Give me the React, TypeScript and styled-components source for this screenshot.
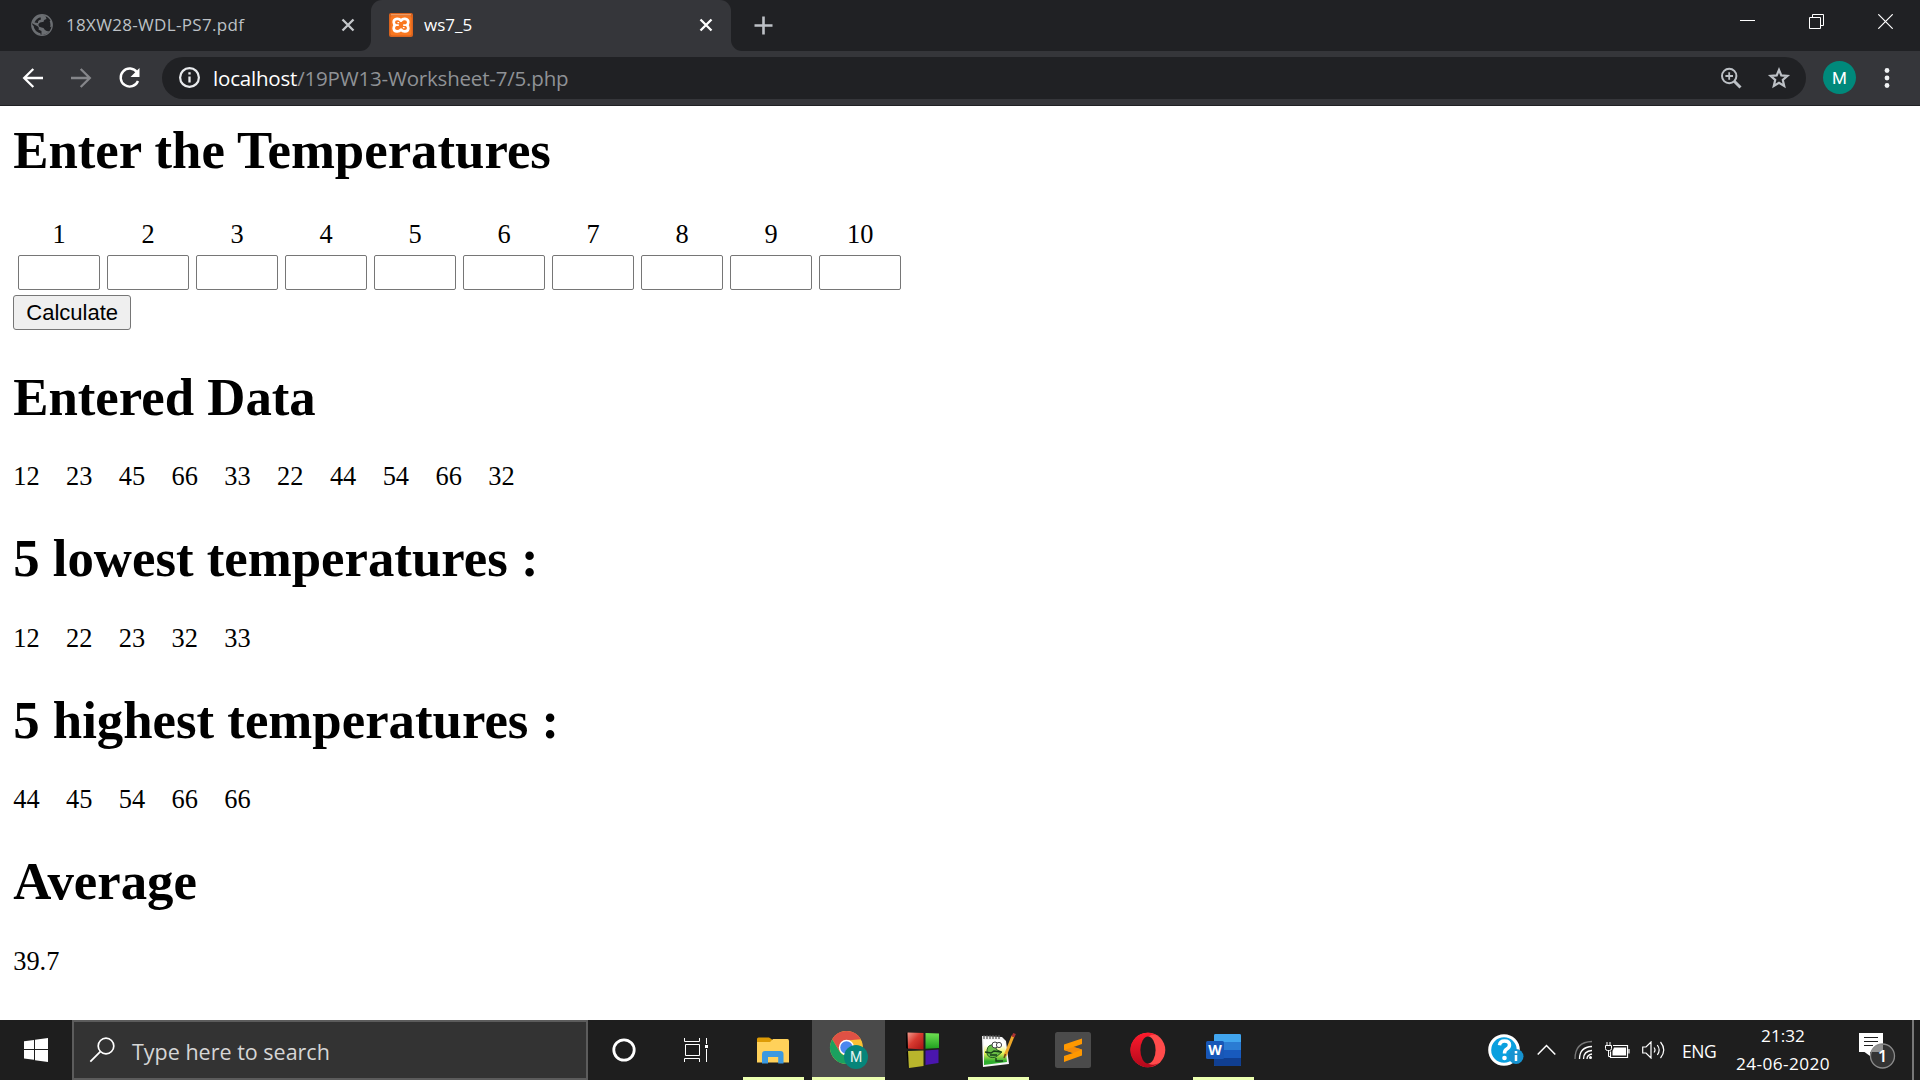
import React from "react";
import styled, { createGlobalStyle } from "styled-components";

const ui = `"Open Sans", "Noto Sans", sans-serif`;

const Global = createGlobalStyle`
  html, body { margin: 0; padding: 0; overflow: hidden; background: #fff; }
  * { box-sizing: border-box; }
  svg { display: block; flex: none; }
`;

const Screen = styled.div`
  width: 1920px;
  height: 1080px;
  display: flex;
  flex-direction: column;
  overflow: hidden;
`;

/* ---------- tab strip ---------- */
const TabStrip = styled.header`
  display: flex;
  height: 51px;
  flex: none;
  background: #35363a;
  font-family: ${ui};
  font-size: 17px;
`;
const InactiveTab = styled.div`
  width: 371px;
  display: flex;
  align-items: center;
  padding: 0 15px 1px 31px;
  background: #202124;
  border-bottom-right-radius: 11px;
  color: #bdc1c6;
`;
const ActiveTabSlot = styled.div`
  width: 360px;
  background: #202124;
`;
const ActiveTab = styled.div`
  height: 100%;
  display: flex;
  align-items: center;
  padding: 0 17px 1px 18px;
  border-radius: 11px 11px 0 0;
  background: #35363a;
  color: #fff;
`;
const TabTitle = styled.span<{ $gap: number; $track?: number }>`
  flex: 1;
  margin-left: ${(p) => p.$gap}px;
  line-height: 22px;
  letter-spacing: ${(p) => p.$track ?? 0}px;
  white-space: nowrap;
`;
const StripRest = styled.div`
  flex: 1;
  display: flex;
  justify-content: space-between;
  background: #202124;
  border-bottom-left-radius: 11px;
  padding-left: 23px;
`;
const NewTab = styled.div`
  display: flex;
  align-items: center;
  padding-bottom: 1px;
`;
const WindowButtons = styled.div`
  display: flex;
  height: 43px;
`;
const WindowButton = styled.div`
  width: 69px;
  display: flex;
  align-items: center;
  justify-content: center;
`;

/* ---------- toolbar ---------- */
const Toolbar = styled.nav`
  height: 55px;
  flex: none;
  display: flex;
  align-items: center;
  padding: 0 21px 1px 21px;
  background: #35363a;
  border-bottom: 1px solid #202124;
`;
const NavIcons = styled.div`
  display: flex;
  gap: 24px;
  width: 141px;
`;
const AddressBar = styled.div`
  flex: 1;
  height: 42px;
  display: flex;
  align-items: center;
  border-radius: 21px;
  padding: 0 15px 0 16px;
  background: #202124;
`;
const Url = styled.div`
  flex: 1;
  margin-left: 12px;
  font-family: ${ui};
  font-size: 20.5px;
  line-height: 28px;
  letter-spacing: -0.19px;
  color: #8f9296;
  white-space: nowrap;
`;
const Host = styled.span`
  color: #fff;
`;
const AddressActions = styled.div`
  display: flex;
  gap: 24px;
`;
const Avatar = styled.div`
  width: 33px;
  height: 33px;
  margin: 0 19px 0 17px;
  display: flex;
  align-items: center;
  justify-content: center;
  border-radius: 50%;
  background: #00897b;
  color: #fff;
  font: 400 17px Roboto, sans-serif;
`;

/* ---------- document ---------- */
const Page = styled.main`
  flex: 1;
  min-height: 0;
  overflow: hidden;
  padding: 14px 13.2px 0;
  background: #fff;
  color: #000;
  font-family: "Liberation Serif", "Times New Roman", serif;
  font-size: 26.4px;
  line-height: 30px;
`;
const Heading = styled.h1`
  margin: 0 0 33.4px;
  font-size: 52.8px;
  line-height: 61px;
  font-weight: 700;
  white-space: nowrap;
`;
const Form = styled.form`
  display: flex;
  flex-direction: column;
  align-items: flex-start;
  margin-bottom: 36.6px;
`;
const Grid = styled.div`
  display: grid;
  grid-template-columns: repeat(10, 82px);
  column-gap: 7px;
  row-gap: 6px;
  padding: 5px;
  text-align: center;
`;
const Field = styled.input`
  width: 82px;
  height: 35px;
  border: 1px solid #767676;
  border-radius: 2px;
  background: #fff;
  outline: none;
`;
const Submit = styled.button`
  width: 118px;
  height: 35px;
  padding: 0;
  border: 1px solid #767676;
  border-radius: 3px;
  background: #efefef;
  color: #000;
  font: 22px "Liberation Sans", Arial, sans-serif;
`;
const Values = styled.p`
  margin: 0 0 37.1px;
  display: flex;
  gap: 26.4px;
`;

/* ---------- taskbar ---------- */
const Taskbar = styled.footer`
  height: 60px;
  flex: none;
  display: flex;
  background: #1e1e1e;
  color: #fff;
  font-family: ${ui};
`;
const Start = styled.div`
  width: 72px;
  display: flex;
  align-items: center;
  justify-content: center;
`;
const Search = styled.div`
  width: 516px;
  display: flex;
  align-items: center;
  padding-left: 15px;
  border: 2px solid #5c5c5c;
  background: #333;
  color: #d6d6d6;
  font-size: 21.5px;
`;
const SearchLabel = styled.span`
  margin: 3px 0 0 17px;
  white-space: nowrap;
`;
const Shell = styled.div`
  width: 72px;
  display: flex;
  align-items: center;
  justify-content: center;
`;
const Apps = styled.div`
  display: flex;
  gap: 2px;
  margin-left: 5px;
`;
const AppButton = styled.div<{ $state?: "open" | "active" }>`
  width: 73px;
  display: flex;
  flex-direction: column;
  align-items: center;
  background: ${(p) => (p.$state === "active" ? "#4a4a4a" : "transparent")};
  &::after {
    content: "";
    height: 3px;
    width: ${(p) => (p.$state === "active" ? 73 : 61)}px;
    background: ${(p) => (p.$state ? "#ecffb0" : "transparent")};
  }
`;
const AppIcon = styled.div`
  flex: 1;
  display: flex;
  align-items: center;
  padding: 3px 2px 0 0;
`;
const Tray = styled.div`
  flex: 1;
  display: flex;
  align-items: center;
  justify-content: flex-end;
`;
const TrayIcon = styled.div<{ $gap: number }>`
  margin-right: ${(p) => p.$gap}px;
`;
const Language = styled.span`
  width: 35px;
  font-size: 17.5px;
  letter-spacing: -0.4px;
  margin-top: 1px;
`;
const Clock = styled.div`
  width: 98px;
  margin: 0 26px 0 17px;
  display: flex;
  flex-direction: column;
  align-items: center;
  font-size: 17.2px;
  line-height: 28px;
  white-space: nowrap;
`;
const ClockDate = styled.span`
  letter-spacing: 0.42px;
`;
const ShowDesktop = styled.div`
  width: 8px;
  height: 60px;
  margin-left: 16px;
  border-left: 2px solid #777;
`;

const Close = ({ color }: { color: string }) => (
  <svg width="16" height="16" viewBox="0 0 16 16">
    <path d="M2.5 2.5l11 11M13.5 2.5l-11 11" stroke={color} strokeWidth="2.3" />
  </svg>
);

const Globe = () => (
  <svg width="22" height="22" viewBox="0 0 22 22">
    <circle cx="11" cy="11" r="9.7" fill="#202124" stroke="#6b6e72" strokeWidth="2.4" />
    <path d="M12.5 1.5Q17 2.500 19.500 6.500Q17 9 14.500 7.500Q14 10 11.500 9.500Q8.500 9.500 9 11.500Q14.500 10.500 14.500 14Q17 14.500 20.500 12.500Q19.500 18 14 20.500Q11.500 21 9.500 20.500V17.500Q6.500 17.500 6.500 14.500L1.500 11Q1 10 1.500 9L6.500 10.500Q8 9.500 6.500 7.500Q7 5 10 5Q13 4.500 12.500 1.500Z" fill="#202124" stroke="none" />
    <path d="M11 1A10 10 0 0 0 1.500 9.500L7 12.500Q8.500 14 7.500 15.500L10.500 17V21Q15.500 21 18.500 17Q15.500 18 13.500 15.500Q13 13.500 10.500 13.500Q7 13 7.500 10Q9 7.500 12.500 8Q12.500 5.500 15.500 5L14.500 2Q13 1 11 1Z" fill="#6b6e72" />
    <path d="M9.500 3.200Q5 4.500 3.500 8.500L7 9Q6.500 6 10 5.500Z" fill="#202124" />
  </svg>
);

const Xampp = () => (
  <svg width="24" height="24" viewBox="0 0 24 24">
    <rect width="24" height="24" rx="2" fill="#d9631e" />
    <rect x="1.5" y="3" width="21" height="19.5" rx="2" fill="#f97820" />
    <path d="M2 1.8h20" stroke="#f7b27e" />
    <path d="M12 7.600Q10.500 5.700 8 5.900Q4.700 6.200 4.700 9.300Q4.800 11.300 6.200 12.200Q4.700 13.300 4.700 15.300Q4.900 18.200 8 18.400Q10.500 18.500 12 16.600Q13.500 18.500 16 18.400Q19.100 18.200 19.300 15.300Q19.300 13.300 17.800 12.200Q19.200 11.300 19.300 9.300Q19.300 6.200 16 5.900Q13.500 5.700 12 7.600Z" fill="none" stroke="#fff" strokeWidth="2.700" strokeLinejoin="round" />
    <path d="M6 12.200H9.800M14.200 12.200H18M9.300 9v1.300M14.700 14v1.300" stroke="#fff" strokeWidth="1.700" />
  </svg>
);

const Chrome = () => (
  <svg width="40" height="40" viewBox="0 0 40 40">
    <circle cx="18.5" cy="17.5" r="16.5" fill="#fbc134" />
    <path d="M4.2 9.2A16.5 16.5 0 0 1 32.8 9.2L18.5 10.5L11.5 21.5Z" fill="#df5145" />
    <path d="M4.2 9.2L11.5 21.5Q14.5 26 19.5 25.7L18.5 34A16.5 16.5 0 0 1 4.2 9.2Z" fill="#1ba15f" />
    <circle cx="18.5" cy="17.5" r="7.7" fill="#fff" />
    <circle cx="18.5" cy="17.5" r="6.2" fill="#4b87ef" />
    <circle cx="28" cy="27" r="12" fill="#07857a" />
    <text x="28" y="32" textAnchor="middle" fontFamily="Roboto, sans-serif" fontSize="14" fill="#e5f4f1">M</text>
  </svg>
);

const Blocks = () => (
  <svg width="36" height="38" viewBox="0 0 36 38">
    <defs>
      <linearGradient id="red" x1="0" y1="0" x2="1" y2="1"><stop stopColor="#f29a8c" /><stop offset=".45" stopColor="#d73a30" /><stop offset="1" stopColor="#a81313" /></linearGradient>
      <linearGradient id="green" x2="0" y2="1"><stop stopColor="#6fe052" /><stop offset="1" stopColor="#1fa01f" /></linearGradient>
    </defs>
    <path d="M1 2L3 1V18L1 17ZM3 20L1.5 21L3 37Z" fill="#050505" />
    <path d="M2.5 1.5L18.5 2V18.5L3 17.5Z" fill="url(#red)" />
    <path d="M20.5 2L34 2.4V17L20.5 17.8Z" fill="url(#green)" />
    <path d="M3 20L18.5 19.5V35L4 37Z" fill="#b9b52c" />
    <path d="M20.5 19.5L33.5 18.5V32L20.5 34Z" fill="#4a16ae" />
  </svg>
);

const Notepad = () => (
  <svg width="36" height="36" viewBox="0 0 36 36">
    <defs>
      <linearGradient id="page" x2="0" y2="1"><stop offset=".2" stopColor="#fff" /><stop offset=".52" stopColor="#ebf45a" /><stop offset=".85" stopColor="#2fae2e" /></linearGradient>
    </defs>
    <path d="M2 4L22 5L26 9L29 32L3 35Z" fill="#f5f5f5" />
    <path d="M4 8L22 8L25 11L27 30L4 33Z" fill="url(#page)" />
    <path d="M4 3v4M7 3v4M10 3v4M13 3v4M16 3v4M19 3v4" stroke="#555" strokeWidth="1.2" />
    <path d="M7 18Q8 12 14 13L17 18L22 20L16 25Q9 27 7 22Z" fill="#69bd45" stroke="#235c21" />
    <circle cx="15" cy="13" r="3" fill="#fff" stroke="#444" />
    <circle cx="19" cy="13" r="2.6" fill="#fff" stroke="#444" />
    <path d="M5 20l6 1 3-2 7 1M10 23h7M16 26v3h7" stroke="#173d19" strokeWidth="1.4" fill="none" />
    <path d="M33 4L25 24" stroke="#eea728" strokeWidth="3" />
    <path d="M34.5 1.5L33 5" stroke="#a33" strokeWidth="3" />
    <path d="M25.5 22L24 26" stroke="#6b4717" strokeWidth="1.5" />
  </svg>
);

const Explorer = () => (
  <svg width="32" height="27" viewBox="0 0 32 27">
    <path d="M0 2Q0 .5 1.5 .5H12l3 2V7H0z" fill="#dd9b05" />
    <path d="M0 5H13L16 2H30.5Q32 2 32 4V25.5H0z" fill="#ffd15a" />
    <path d="M5 26.5V17q0-3 3-3h15.5q3 0 3 3v9.5h-5.3V20H11v6.5z" fill="#3b99e0" />
  </svg>
);

const Sublime = () => (
  <svg width="36" height="36" viewBox="0 0 36 36">
    <rect width="36" height="36" rx="2.5" fill="#4b4b4b" />
    <path d="M9 12.5L27 6.5V12L18.5 15L27 17.5V23.5L9 30V24L18 21L9 18z" fill="#ff9800" />
    <path d="M9 18l9 3 9-3.5-8.5-2.5z" fill="#f28b0b" />
  </svg>
);

const Opera = () => (
  <svg width="36" height="36" viewBox="0 0 36 36">
    <defs><linearGradient id="opera" x2="0" y2="1"><stop stopColor="#ff1b2d" /><stop offset="1" stopColor="#b4081b" /></linearGradient></defs>
    <circle cx="18" cy="18" r="17.3" fill="#ff4b4b" />
    <path d="M18 .7A17.3 17.3 0 1 0 29 31Q24 34 19 32L12 25L13 8L21 3Q26 2 29 5A17.3 17.3 0 0 0 18 .7Z" fill="url(#opera)" />
    <ellipse cx="18" cy="18" rx="7.6" ry="13.5" fill="#1e1e1e" />
  </svg>
);

const Word = () => (
  <svg width="36" height="34" viewBox="0 0 36 34">
    <rect x="9" y="1" width="27" height="32" rx="1.5" fill="#2b7cd3" />
    <path d="M9 9V2.5Q9 1 10.5 1h24Q36 1 36 2.5V9z" fill="#41a5ee" />
    <path d="M9 17h27v8H9z" fill="#185abd" />
    <path d="M9 25h27v6.5q0 1.5-1.5 1.5h-24Q9 33 9 31.5z" fill="#103f91" />
    <rect x="1" y="8" width="18" height="18" rx="1.5" fill="#1857b7" />
    <text x="10" y="22" textAnchor="middle" fontFamily="Open Sans, sans-serif" fontWeight="700" fontSize="14" fill="#fff">W</text>
  </svg>
);

export default function App() {
  return (
    <Screen>
      <Global />
      <TabStrip>
        <InactiveTab>
          <Globe />
          <TabTitle $gap={13} $track={0.32}>18XW28-WDL-PS7.pdf</TabTitle>
          <Close color="#c4c7ca" />
        </InactiveTab>
        <ActiveTabSlot>
          <ActiveTab>
            <Xampp />
            <TabTitle $gap={11}>ws7_5</TabTitle>
            <Close color="#fff" />
          </ActiveTab>
        </ActiveTabSlot>
        <StripRest>
          <NewTab>
            <svg width="19" height="19" viewBox="0 0 19 19"><path d="M9.5 .5v18M.5 9.5h18" stroke="#bdc1c6" strokeWidth="2.6" /></svg>
          </NewTab>
          <WindowButtons>
            <WindowButton>
              <svg width="15" height="15" viewBox="0 0 15 15"><path d="M0 6.5h15" stroke="#fff" /></svg>
            </WindowButton>
            <WindowButton>
              <svg width="15" height="15" viewBox="0 0 15 15"><path d="M.5 3.5h11v11H.5zM3.5 3.5v-3h11v11h-3" fill="none" stroke="#fff" /></svg>
            </WindowButton>
            <WindowButton>
              <svg width="15" height="15" viewBox="0 0 15 15"><path d="M.3.3l14.4 14.4M14.7.3L.3 14.7" stroke="#fff" strokeWidth="1.2" /></svg>
            </WindowButton>
          </WindowButtons>
        </StripRest>
      </TabStrip>

      <Toolbar>
        <NavIcons>
          <svg width="24" height="24" viewBox="0 0 24 24"><path d="M22 12H3.5M12.3 3L3.2 12l9.1 9" fill="none" stroke="#fff" strokeWidth="2.3" /></svg>
          <svg width="24" height="24" viewBox="0 0 24 24"><path d="M2 12h18.5M11.7 3l9.1 9-9.1 9" fill="none" stroke="#85868a" strokeWidth="2.3" /></svg>
          <svg width="24" height="24" viewBox="0 0 24 24"><path d="M20 6.300A9 9 0 1 0 21 15" fill="none" stroke="#fff" strokeWidth="2.4" /><path d="M22.500 2v9h-9z" fill="#fff" /></svg>
        </NavIcons>
        <AddressBar>
          <svg width="23" height="23" viewBox="0 0 23 23"><circle cx="11.5" cy="11.5" r="9.4" fill="none" stroke="#e8eaed" strokeWidth="2.2" /><path d="M11.5 10.5v6M11.5 6.3v2.3" stroke="#e8eaed" strokeWidth="2.3" /></svg>
          <Url><Host>localhost</Host>/19PW13-Worksheet-7/5.php</Url>
          <AddressActions>
            <svg width="24" height="24" viewBox="0 0 24 24"><circle cx="10.2" cy="10" r="7.2" fill="none" stroke="#bdc1c6" strokeWidth="2" /><path d="M15 15l6.5 6.5" stroke="#bdc1c6" strokeWidth="3" /><path d="M10.2 6.2v7.6M6.4 10H14" stroke="#bdc1c6" strokeWidth="1.8" /></svg>
            <svg width="24" height="24" viewBox="0 0 24 24"><path d="M12 3.8l2.3 5.6 6.1.5-4.6 4 1.4 6-5.2-3.2-5.2 3.2 1.4-6-4.6-4 6.1-.5z" fill="none" stroke="#bdc1c6" strokeWidth="2.2" /></svg>
          </AddressActions>
        </AddressBar>
        <Avatar>M</Avatar>
        <svg width="24" height="24" viewBox="0 0 24 24"><g fill="#f1f3f4"><circle cx="12" cy="4.5" r="2.4" /><circle cx="12" cy="12" r="2.4" /><circle cx="12" cy="19.5" r="2.4" /></g></svg>
      </Toolbar>

      <Page>
        <Heading>Enter the Temperatures</Heading>
        <Form>
          <Grid>
            {Array.from({ length: 10 }, (_, i) => <span key={i}>{i + 1}</span>)}
            {Array.from({ length: 10 }, (_, i) => <Field key={i} aria-label={`${i + 1}`} />)}
          </Grid>
          <Submit type="button">Calculate</Submit>
        </Form>
        <Heading>Entered Data</Heading>
        <Values>{[12, 23, 45, 66, 33, 22, 44, 54, 66, 32].map((v, i) => <span key={i}>{v}</span>)}</Values>
        <Heading>5 lowest temperatures :</Heading>
        <Values>{[12, 22, 23, 32, 33].map((v, i) => <span key={i}>{v}</span>)}</Values>
        <Heading>5 highest temperatures :</Heading>
        <Values>{[44, 45, 54, 66, 66].map((v, i) => <span key={i}>{v}</span>)}</Values>
        <Heading>Average</Heading>
        <Values>39.7</Values>
      </Page>

      <Taskbar>
        <Start>
          <svg width="24" height="24" viewBox="0 0 24 24"><path d="M0 3.2L10 1.9V11H0zM11 1.7L24 0v11H11zM0 12h10v9.8L0 20.6zM11 12h13v12l-13-1.8z" fill="#fff" /></svg>
        </Start>
        <Search>
          <svg width="26" height="26" viewBox="0 0 26 26"><circle cx="17" cy="9" r="7.8" fill="none" stroke="#fff" strokeWidth="1.7" /><path d="M11.3 14.7L1.3 24.7" stroke="#fff" strokeWidth="1.8" /></svg>
          <SearchLabel>Type here to search</SearchLabel>
        </Search>
        <Shell>
          <svg width="24" height="24" viewBox="0 0 24 24"><circle cx="12" cy="12" r="10.2" fill="none" stroke="#fff" strokeWidth="2.8" /></svg>
        </Shell>
        <Shell>
          <svg width="25" height="24" viewBox="0 0 25 24"><path d="M1.5 6.5h14v11h-14zM.5 0v3.5h15V0M.5 24v-3.5h15V24M22.5 0v6M22.5 11v13" fill="none" stroke="#fff" /><path d="M21 7h3v3h-3z" fill="#fff" /></svg>
        </Shell>
        <Apps>
          <AppButton $state="open"><AppIcon><Explorer /></AppIcon></AppButton>
          <AppButton $state="active"><AppIcon><Chrome /></AppIcon></AppButton>
          <AppButton><AppIcon><Blocks /></AppIcon></AppButton>
          <AppButton $state="open"><AppIcon><Notepad /></AppIcon></AppButton>
          <AppButton><AppIcon><Sublime /></AppIcon></AppButton>
          <AppButton><AppIcon><Opera /></AppIcon></AppButton>
          <AppButton $state="open"><AppIcon><Word /></AppIcon></AppButton>
        </Apps>
        <Tray>
          <TrayIcon $gap={13}>
            <svg width="36" height="34" viewBox="0 0 36 34"><circle cx="16" cy="17" r="14.3" fill="#0aa0df" stroke="#fff" strokeWidth="3" /><path d="M11.5 12.3Q12 8 16.5 8Q21.5 8 21.5 12Q21.5 14.5 18.5 16.3Q16.5 17.6 16.5 20.5" fill="none" stroke="#fff" strokeWidth="3.5" /><circle cx="16.5" cy="25" r="2.3" fill="#fff" /><circle cx="28" cy="23.5" r="7.5" fill="#1693d1" /><path d="M28 22v6M28 18v2.5" stroke="#fff" strokeWidth="2.5" /></svg>
          </TrayIcon>
          <TrayIcon $gap={18}>
            <svg width="19" height="12" viewBox="0 0 19 12"><path d="M.7 10.5L9.5 1.5l8.8 9" fill="none" stroke="#fff" strokeWidth="1.5" /></svg>
          </TrayIcon>
          <TrayIcon $gap={12}>
            <svg width="19" height="20" viewBox="0 0 19 20"><g fill="none" strokeWidth="1.3"><path d="M1 19Q1 2 18 1.5" stroke="#777" /><path d="M5.5 19Q5.5 7 18 6.5M9.5 19Q9.500 11 18 10.500M13 19Q13 15 18 14" stroke="#fff" /></g><circle cx="16.500" cy="17.500" r="1.500" fill="#fff" /></svg>
          </TrayIcon>
          <TrayIcon $gap={12}>
            <svg width="25" height="17" viewBox="0 0 25 17"><path d="M8 3.5h14.5v12H5.5V9.5M24 7v4.5" fill="none" stroke="#fff" strokeWidth="1.2" /><path d="M9 5.5h12v8H7.5V9Z" fill="#fff" /><path d="M.5 3.5h6v3q0 2-2 2h-2q-2 0-2-2zM2 0v3M5 0v3M3.5 9v5.5H5" fill="#1e1e1e" stroke="#fff" /></svg>
          </TrayIcon>
          <TrayIcon $gap={17}>
            <svg width="23" height="18" viewBox="0 0 23 18"><path d="M.7 6H4l5-5v16L4 12H.7zM12 6.5Q14 9 12 11.5M15.3 4Q19 9 15.3 14M18.5 1Q25 9 18.5 17" fill="none" stroke="#fff" strokeWidth="1.2" /></svg>
          </TrayIcon>
          <Language>ENG</Language>
          <Clock><span>21:32</span><ClockDate>24-06-2020</ClockDate></Clock>
          <svg width="38" height="38" viewBox="0 0 38 38"><path d="M1 2h24v19H12v4L6.5 21H1z" fill="#fff" /><path d="M6 6.5h14M6 10.5h14M6 14.5h9" stroke="#1e1e1e" /><circle cx="24.5" cy="25" r="12" fill="#343434" stroke="#8b8b8b" strokeWidth="1.3" /><path d="M14 19Q18 13 25 13.7V21H14z" fill="#929292" /><text x="24.5" y="31" textAnchor="middle" fontFamily="Open Sans, sans-serif" fontWeight="600" fontSize="17" fill="#fff">1</text></svg>
          <ShowDesktop />
        </Tray>
      </Taskbar>
    </Screen>
  );
}
